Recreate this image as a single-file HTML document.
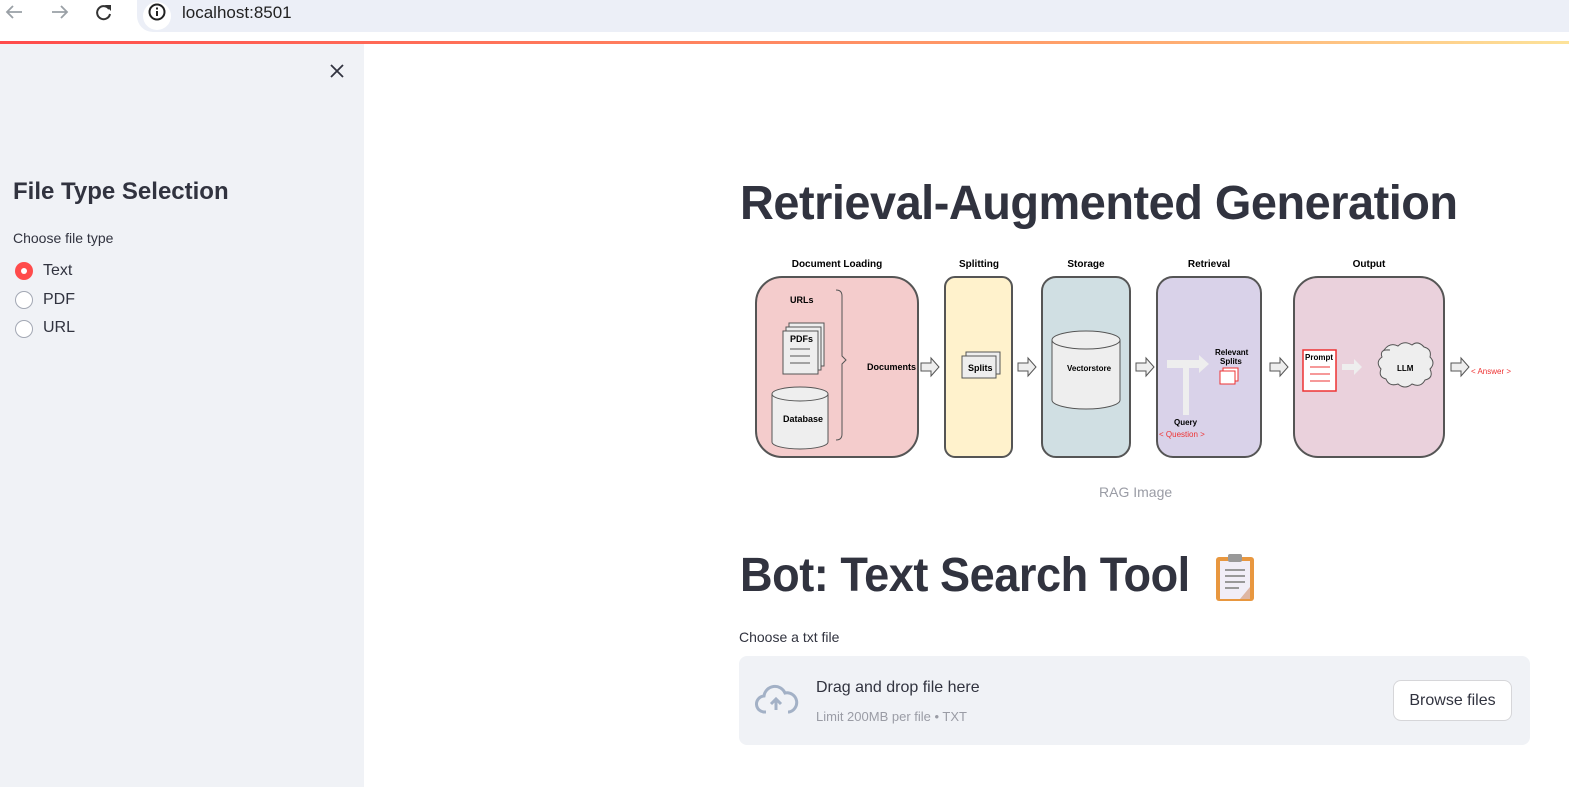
<!DOCTYPE html>
<html><head><meta charset="utf-8"><style>
*{margin:0;padding:0;box-sizing:border-box}
body{width:1569px;height:787px;position:relative;overflow:hidden;background:#fff;font-family:"Liberation Sans",sans-serif;color:#31333f}
.abs{position:absolute}
</style></head><body>
<div class="abs" style="left:0;top:0;width:1569px;height:41px;background:#fff"></div>
<div class="abs" style="left:137px;top:0;width:1432px;height:32px;background:#eceff7;border-radius:0 0 0 16px"></div>
<div class="abs" style="left:143px;top:2px;width:28px;height:28px;border-radius:50%;background:#fff"></div>
<svg class="abs" style="left:0;top:0" width="180" height="32">
<path d="M22 12H8M13 6l-6 6 6 6" stroke="#9aa0a6" stroke-width="1.8" fill="none"/>
<path d="M52 12h14M61 6l6 6-6 6" stroke="#9aa0a6" stroke-width="1.8" fill="none"/>
<path d="M109 9a6.5 6.5 0 1 0 1 5" stroke="#333" stroke-width="2" fill="none"/><path d="M105 5h6v6z" fill="#333"/>
<circle cx="157" cy="12" r="7.5" stroke="#222" stroke-width="2" fill="none"/><rect x="156" y="11" width="2" height="5" fill="#222"/><rect x="156" y="7.5" width="2" height="2" fill="#222"/>
</svg>
<div class="abs" style="left:182px;top:3px;font-size:17px;color:#222">localhost:8501</div>
<div class="abs" style="left:0;top:41px;width:1569px;height:3px;background:linear-gradient(90deg,#ff4b4b,#ffa36b 70%,#fde39a)"></div>
<div class="abs" style="left:0;top:44px;width:364px;height:743px;background:#f0f2f6"></div>
<svg class="abs" style="left:329px;top:63px" width="16" height="16"><path d="M2 2l12 12M14 2L2 14" stroke="#31333f" stroke-width="1.8"/></svg>
<div class="abs" style="left:13px;top:178px;font-size:24px;font-weight:bold">File Type Selection</div>
<div class="abs" style="left:13px;top:230px;font-size:14px">Choose file type</div>
<div class="abs" style="left:15px;top:262px;width:18px;height:18px;border-radius:50%;background:#ff4b4b"></div>
<div class="abs" style="left:21px;top:268px;width:6px;height:6px;border-radius:50%;background:#fff"></div>
<div class="abs" style="left:15px;top:291px;width:18px;height:18px;border-radius:50%;border:1px solid #a3a8b4;background:#fff"></div>
<div class="abs" style="left:15px;top:320px;width:18px;height:18px;border-radius:50%;border:1px solid #a3a8b4;background:#fff"></div>
<div class="abs" style="left:43px;top:262px;font-size:16px">Text</div>
<div class="abs" style="left:43px;top:291px;font-size:16px">PDF</div>
<div class="abs" style="left:43px;top:319px;font-size:16px">URL</div>
<div class="abs" style="left:740px;top:176px;font-size:48px;font-weight:bold;white-space:nowrap;transform-origin:0 0;transform:scaleX(0.977);letter-spacing:-0.5px">Retrieval-Augmented Generation</div>
<svg class="abs" style="left:740px;top:250px" width="790" height="220" font-family="Liberation Sans" font-weight="bold" font-size="9">
<g text-anchor="middle" font-size="10"><text x="97" y="17">Document Loading</text><text x="239" y="17">Splitting</text><text x="346" y="17">Storage</text><text x="469" y="17">Retrieval</text><text x="629" y="17">Output</text></g>
<rect x="16" y="27" width="162" height="180" rx="26" fill="#f4cccc" stroke="#555" stroke-width="2"/>
<rect x="205" y="27" width="67" height="180" rx="10" fill="#fff2cc" stroke="#555" stroke-width="2"/>
<rect x="302" y="27" width="88" height="180" rx="14" fill="#d0dfe3" stroke="#555" stroke-width="2"/>
<rect x="417" y="27" width="104" height="180" rx="16" fill="#d9d2e9" stroke="#555" stroke-width="2"/>
<rect x="554" y="27" width="150" height="180" rx="24" fill="#ead1dc" stroke="#555" stroke-width="2"/>
<text x="50" y="53">URLs</text>
<rect x="49" y="73" width="35" height="43" fill="#eee" stroke="#555"/><rect x="46" y="77" width="35" height="43" fill="#eee" stroke="#555"/><rect x="43" y="81" width="35" height="43" fill="#eee" stroke="#555"/>
<text x="50" y="92">PDFs</text><path d="M50 99h20M50 106h20M50 113h20" stroke="#555"/>
<path d="M32 144v48a28 7 0 0 0 56 0v-48" fill="#eee" stroke="#555"/><ellipse cx="60" cy="144" rx="28" ry="7" fill="#eee" stroke="#555"/>
<text x="43" y="172">Database</text>
<path d="M96 40q6 0 6 6v60l4 4-4 4v70q0 6-6 6" fill="none" stroke="#555"/>
<text x="127" y="120">Documents</text>
<g fill="#eee" stroke="#555"><path d="M181 113h10v-5l8 9-8 9v-5h-10z"/><path d="M278 113h10v-5l8 9-8 9v-5h-10z"/><path d="M396 113h10v-5l8 9-8 9v-5h-10z"/><path d="M530 113h10v-5l8 9-8 9v-5h-10z"/><path d="M711 113h10v-5l8 9-8 9v-5h-10z"/></g>
<rect x="226" y="102" width="34" height="22" fill="#eee" stroke="#555"/><rect x="222" y="106" width="34" height="22" fill="#eee" stroke="#555"/>
<text x="228" y="121">Splits</text>
<path d="M312 90v60a34 9 0 0 0 68 0v-60" fill="#eee" stroke="#555"/><ellipse cx="346" cy="90" rx="34" ry="9" fill="#eee" stroke="#555"/>
<text x="327" y="121" font-size="8">Vectorstore</text>
<path d="M443 165v-47h-16v-8h32v-5l10 9-10 9v-5h-10v47z" fill="#eee"/>
<text x="434" y="175" font-size="8">Query</text><text x="419" y="187" fill="#e33" font-weight="normal" font-size="8">&lt; Question &gt;</text>
<text x="475" y="105" font-size="8">Relevant</text><text x="480" y="114" font-size="8">Splits</text>
<rect x="483" y="118" width="15" height="13" fill="#fff" stroke="#e33"/><rect x="480" y="121" width="15" height="13" fill="#fff" stroke="#e33"/>
<rect x="563" y="100" width="33" height="41" fill="#fff" stroke="#e33" stroke-width="1.5"/><text x="565" y="110" font-size="8">Prompt</text>
<path d="M570 117h20M570 124h20M570 131h20" stroke="#e33"/>
<path d="M602 114h12v-5l8 8-8 8v-5h-12z" fill="#eee"/>
<path d="M644 100q6-8 14-4q6-6 14-1q6-5 12 2q8 2 6 10q6 6 0 12q4 9-5 11q-4 8-13 4q-7 6-14 0q-9 3-12-5q-8-2-5-10q-6-7 1-12q-3-8 8-7z" fill="#eee" stroke="#555"/>
<text x="657" y="121" font-size="8">LLM</text>
<text x="731" y="124" fill="#e33" font-weight="normal" font-size="8">&lt; Answer &gt;</text>
</svg>
<div class="abs" style="left:1099px;top:484px;font-size:14px;color:#9a9ca5">RAG Image</div>
<div class="abs" style="left:740px;top:548px;font-size:48px;font-weight:bold;white-space:nowrap;transform-origin:0 0;transform:scaleX(0.94);letter-spacing:-0.5px">Bot: Text Search Tool</div>
<svg class="abs" style="left:1214px;top:553px" width="44" height="50"><rect x="2" y="4" width="38" height="44" rx="3" fill="#e8973f"/><rect x="6" y="8" width="30" height="38" fill="#f1eef7"/><path d="M36 34v12h-10z" fill="#d7cce6"/><path d="M36 34l-10 12h10z" fill="#e8973f" opacity=".4"/><rect x="14" y="1" width="14" height="8" rx="2" fill="#999"/><path d="M11 17h20M11 23h20M11 29h20M11 35h14" stroke="#999" stroke-width="2"/></svg>
<div class="abs" style="left:739px;top:629px;font-size:14px">Choose a txt file</div>
<div class="abs" style="left:739px;top:656px;width:791px;height:89px;background:#f0f2f6;border-radius:8px"></div>
<svg class="abs" style="left:755px;top:684px" width="44" height="32"><path d="M11 28h-1a8 8 0 0 1-1-16 11 11 0 0 1 21-3 9 9 0 0 1 4 19h-1" stroke="#a3b1c6" stroke-width="3" fill="none"/><path d="M21 26v-10M16 20l5-5 5 5" stroke="#a3b1c6" stroke-width="3" fill="none"/></svg>
<div class="abs" style="left:816px;top:679px;font-size:16px">Drag and drop file here</div>
<div class="abs" style="left:816px;top:709px;font-size:13px;color:#9a9ca5">Limit 200MB per file • TXT</div>
<div class="abs" style="left:1393px;top:680px;width:119px;height:41px;border:1px solid #d6d6d9;border-radius:8px;background:#fff;font-size:16px;text-align:center;line-height:39px">Browse files</div>
</body></html>
